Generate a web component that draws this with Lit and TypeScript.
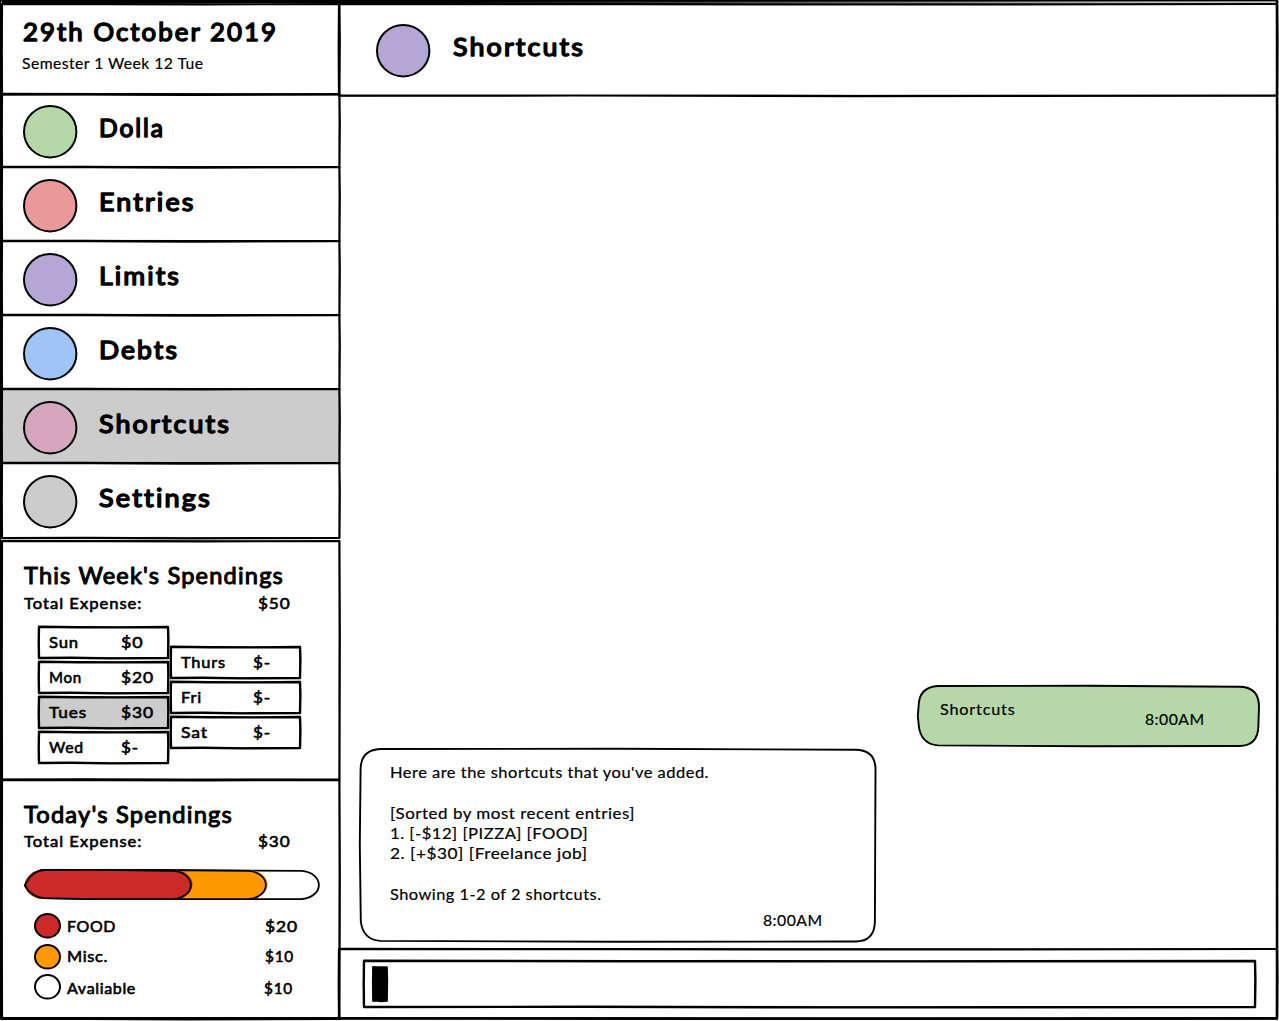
import { LitElement, html, svg, css, nothing } from "lit";
import { customElement, property } from "lit/decorators.js";

/** One line of lettering, fitted to a given width; its baseline lies `size` below its top. */
@customElement("sk-text")
class SkText extends LitElement {
  @property() text = "";
  @property({ type: Number }) w = 100;
  @property({ type: Number }) size = 15.5;
  @property({ type: Number }) ink = 0.15;
  @property({ type: Number }) gap = 0.03;
  static styles = css`
    :host { display: block; flex: none; }
    svg { display: block; overflow: visible; }
    text {
      font-family: Lato, "Open Sans", sans-serif;
      font-variant-ligatures: none;
      fill: #000;
      stroke: #000;
      stroke-linejoin: round;
      white-space: pre;
    }
  `;
  render() {
    return html`<svg width=${this.w} height=${Math.ceil(this.size * 1.25)}>
      <text x="0" y=${this.size} font-size=${this.size} stroke-width=${this.ink}
        letter-spacing=${this.gap * this.size}
        textLength=${this.w} lengthAdjust="spacingAndGlyphs">${this.text}</text>
    </svg>`;
  }
}

/** Hand-drawn frame around its slot. */
@customElement("sk-box")
class SkBox extends LitElement {
  @property({ type: Number }) w = 100;
  @property({ type: Number }) h = 100;
  @property({ type: Number }) r = 0;
  @property({ type: Number }) line = 2.2;
  @property() fill = "none";
  static styles = css`
    :host { display: block; position: relative; box-sizing: border-box; flex: none; }
    svg { position: absolute; left: 0; top: 0; overflow: visible; pointer-events: none; }
    .body { position: relative; height: 100%; }
    path, rect { stroke-linejoin: round; stroke-linecap: round; }
  `;
  render() {
    const { w, h, r, line } = this;
    const q = Math.min(r, h / 2);
    const rounded = `M${r} 0 L${w * 0.5} -.3 L${w - r} .8 Q${w} 1 ${w} ${q + 0.5}
      L${w - 0.6} ${h - q} Q${w - 1} ${h} ${w - r} ${h} L${w * 0.5} ${h + 0.3} L${r} ${h - 0.6}
      Q3 ${h - 2} .8 ${h - q} L-.2 ${h * 0.5} L.6 ${q} Q1 1 ${r} 0Z`;
    const pill = `M${r} 0 L${w * 0.4} -.2 L${w - r} .9 A${r} ${h / 2 - 0.4} 0 0 1 ${w - r} ${h}
      L${w * 0.4} ${h + 0.2} L${r} ${h - 0.8} Q6 ${h - 2} 0 ${h / 2 + 1} Q6 1 ${r} 0Z`;
    const square = `M0 -.2 L${w * 0.3} .2 L${w * 0.6} .4 L${w} 0 L${w + 0.4} ${h * 0.4} L${w} ${h}
      L${w * 0.55} ${h + 0.4} L${w * 0.25} ${h - 0.2} L0 ${h} L-.3 ${h * 0.5}Z`;
    const outline = !r ? square : r > h / 2 ? pill : rounded;
    return html`<svg width=${w} height=${h}>
        ${this.fill === "none" ? nothing : svg`<rect width=${w} height=${h} rx=${r} ry=${q} fill=${this.fill} />`}
        <path d=${outline} fill="none" stroke="#000" stroke-width=${line} />
        ${r ? nothing : svg`<path d="M0 .5 L${w * 0.4} -.6 L${w} .5 L${w - 0.5} ${h * 0.6} L${w + 0.3} ${h}
          L${w * 0.45} ${h - 0.6} L0 ${h + 0.4} L.4 ${h * 0.4}Z" fill="none" stroke="#000" stroke-width="1" opacity=".5" />`}
      </svg>
      <div class="body"><slot></slot></div>`;
  }
}

/** Outlined disc. */
@customElement("sk-disc")
class SkDisc extends LitElement {
  @property({ type: Number }) w = 54.4;
  @property({ type: Number }) h = 53.4;
  @property() fill = "#fff";
  static styles = css`
    :host { display: block; flex: none; }
    svg { display: block; overflow: visible; }
  `;
  render() {
    const { w, h } = this;
    return html`<svg width=${w} height=${h}>
      <ellipse cx=${w / 2} cy=${h / 2} rx=${w / 2 - 1} ry=${h / 2 - 1} fill=${this.fill} stroke="#000" stroke-width="2" />
    </svg>`;
  }
}

const NAV = [
  { name: "Dolla", w: 66, h: 73, color: "#b6d7a8", bg: "none" },
  { name: "Entries", w: 96.5, h: 74, color: "#ea9999", bg: "none" },
  { name: "Limits", w: 82, h: 74, color: "#b4a7d6", bg: "none" },
  { name: "Debts", w: 80, h: 74, color: "#9fc5f8", bg: "none" },
  { name: "Shortcuts", w: 132, h: 74, color: "#d5a6bd", bg: "#cccccc" },
  { name: "Settings", w: 113, h: 75, color: "#cccccc", bg: "none" },
];
type Day = [string, number, string, number, string?];
const DAYS_A: Day[] = [
  ["Sun", 30, "$0", 22.5],
  ["Mon", 33, "$20", 33],
  ["Tues", 38, "$30", 33, "#cccccc"],
  ["Wed", 35, "$-", 18],
];
const DAYS_B: Day[] = [
  ["Thurs", 45, "$-", 18],
  ["Fri", 21, "$-", 18],
  ["Sat", 27, "$-", 18],
];
const LEGEND = [
  { name: "FOOD", w: 49, amount: "$20", aw: 33, color: "#cc2929" },
  { name: "Misc.", w: 41, amount: "$10", aw: 29, color: "#ff9900" },
  { name: "Avaliable", w: 69, amount: "$10", aw: 29, color: "#ffffff" },
];
const LINES: [string, number, number][] = [
  ["Here are the shortcuts that you've added.", 319, 41],
  ["[Sorted by most recent entries]", 245, 20],
  ["1. [-$12] [PIZZA] [FOOD]", 198, 20],
  ["2. [+$30] [Freelance job]", 197.5, 41],
  ["Showing 1-2 of 2 shortcuts.", 211.5, 26],
];

@customElement("app-root")
class AppRoot extends LitElement {
  static styles = css`
    :host { display: block; width: 1279px; height: 1021px; overflow: hidden; background: #fff; }
    .frame { padding: 1.3px 0 0 1.6px; }
    .page {
      display: grid;
      grid-template-columns: 337.4px 938px;
      padding-top: 2.4px;
      background: linear-gradient(to right, #000 35%, rgba(0, 0, 0, .25) 90%) top / 100% 2.4px no-repeat;
    }
    .date { height: 90.5px; }
    .date .in { padding: 12.4px 0 0 21px; }
    .sub { margin: 4.6px 0 0 -.4px; }
    .item .in { display: flex; align-items: flex-start; padding: 12px 0 0 21.2px; }
    .item:first-of-type .in { padding-top: 11.1px; }
    .item .name { margin: 7.1px 0 0 22.2px; }
    .week { margin-top: 3px; }
    .panel .in { padding: 21px 0 0 22.2px; }
    .total { display: flex; margin-top: 2.5px; }
    .total .amount { margin-left: auto; margin-right: 48.7px; }
    .days { display: flex; gap: 3px; padding: 14.2px 0 0 15.6px; }
    .col { display: flex; flex-direction: column; gap: 4px; }
    .col.late { padding-top: 20px; }
    .day { display: grid; grid-template-columns: 72px 1fr; padding: 4.7px 0 0 10px; }
    .bar { display: grid; margin-top: 18.6px; margin-left: .9px; height: 29px; }
    .bar > * { grid-area: 1 / 1; }
    .legend { display: flex; flex-direction: column; gap: 4.8px; padding: 14.6px 0 0 10px; }
    .entry { display: flex; align-items: flex-start; }
    .entry .label { margin: 2.4px 0 0 6.4px; }
    .entry .slot { width: 73.6px; margin-left: auto; padding-top: 2.4px; }
    .entry:last-child .label { margin-top: 3.4px; }
    .entry:last-child .slot { padding-top: 3.4px; width: 74.6px; }
    .main { display: flex; flex-direction: column; }
    .title { display: flex; align-items: flex-start; padding: 20.6px 0 0 37.2px; }
    .title .name { margin: 6.3px 0 0 22.6px; }
    .chat { display: flex; flex-direction: column; height: 853.5px; box-sizing: border-box; padding: 590.3px 17.6px 0 20.6px; }
    .mine { align-self: flex-end; width: 341px; height: 60px; }
    .mine .in { display: flex; justify-content: space-between; padding: 13.8px 54.7px 0 21.3px; }
    .mine .time { margin-top: 9.5px; }
    .reply { margin-top: 3px; width: 515.5px; height: 192.5px; }
    .reply .in { padding: 13.4px 53px 0 30.2px; }
    .reply .line { display: flex; align-items: flex-start; }
    .reply .time { display: flex; justify-content: flex-end; }
    .compose { padding: 12.3px 0 0 25.4px; }
    .field { width: 891px; height: 46px; }
    .caret { padding: 6px 0 0 8.6px; }
  `;

  private day([name, w, amount, aw, bg]: Day) {
    return html`<sk-box w="129" h="31" fill=${bg ?? "none"} line="2.4" style="height:31px;width:129px">
      <div class="day">
        <sk-text text=${name} w=${w} ink=".6" size="15.5" gap=".05"></sk-text>
        <sk-text text=${amount} w=${aw} ink=".6" size="15.5" gap=".05"></sk-text>
      </div>
    </sk-box>`;
  }

  private total(amount: string) {
    return html`<div class="total">
      <sk-text text="Total Expense:" w="118.5" ink=".6" size="15.5" gap=".06"></sk-text>
      <sk-text class="amount" text=${amount} w="32.5" ink=".6" size="15.5" gap=".05"></sk-text>
    </div>`;
  }

  render() {
    return html`
      <sk-box class="frame" w="1277" h="1018.4" line="2.6">
        <div class="page">
          <div class="side">
            <sk-box class="date" w="337.4" h="90.5">
              <div class="in">
                <sk-text text="29th October 2019" w="255" size="25.4" ink="1.5" gap=".08"></sk-text>
                <sk-text class="sub" text="Semester 1 Week 12 Tue" w="181.5" size="15.9" ink=".2"></sk-text>
              </div>
            </sk-box>
            <nav>
              ${NAV.map((n) => html`<sk-box class="item" w="337.4" h=${n.h} fill=${n.bg} style="height:${n.h}px">
                <div class="in">
                  <sk-disc fill=${n.color}></sk-disc>
                  <sk-text class="name" text=${n.name} w=${n.w} size="25" ink="1.5" gap=".08"></sk-text>
                </div>
              </sk-box>`)}
            </nav>
            <sk-box class="panel week" w="337.4" h="238.5" style="height:238.5px">
              <div class="in">
                <sk-text text="This Week's Spendings" w="260" size="22.4" ink="1" gap=".05"></sk-text>
                ${this.total("$50")}
                <div class="days">
                  <div class="col">${DAYS_A.map((d) => this.day(d))}</div>
                  <div class="col late">${DAYS_B.map((d) => this.day(d))}</div>
                </div>
              </div>
            </sk-box>
            <sk-box class="panel" w="337.4" h="239" style="height:239px">
              <div class="in">
                <sk-text text="Today's Spendings" w="209" size="22.4" ink="1" gap=".05"></sk-text>
                ${this.total("$30")}
                <div class="bar">
                  <sk-box w="295.5" h="29" r="19" line="1.8" fill="#ffffff"></sk-box>
                  <sk-box w="242.5" h="29" r="19" line="1.8" fill="#ff9900"></sk-box>
                  <sk-box w="167.5" h="29" r="19" line="1.8" fill="#cc2929"></sk-box>
                </div>
                <div class="legend">
                  ${LEGEND.map((l) => html`<div class="entry">
                    <sk-disc w="27" h="25.6" fill=${l.color}></sk-disc>
                    <sk-text class="label" text=${l.name} w=${l.w} size="15.5" ink=".6" gap=".04"></sk-text>
                    <div class="slot"><sk-text text=${l.amount} w=${l.aw} size="15.5" ink=".6" gap=".05"></sk-text></div>
                  </div>`)}
                </div>
              </div>
            </sk-box>
          </div>
          <div class="main">
            <sk-box w="938" h="91.7" style="height:91.7px">
              <div class="title">
                <sk-disc fill="#b4a7d6"></sk-disc>
                <sk-text class="name" text="Shortcuts" w="132" size="25" ink="1.5" gap=".08"></sk-text>
              </div>
            </sk-box>
            <div class="chat">
              <sk-box class="mine" w="341" h="60" r="20" line="1.9" fill="#b6d7a8">
                <div class="in">
                  <sk-text text="Shortcuts" w="75.5" size="15.9" ink=".2" gap=".05"></sk-text>
                  <sk-text class="time" text="8:00AM" w="59.5" size="15.9" ink=".2"></sk-text>
                </div>
              </sk-box>
              <sk-box class="reply" w="515.5" h="192.5" r="20" line="1.9">
                <div class="in">
                  ${LINES.map(([t, w, h]) => html`<div class="line" style="height:${h}px">
                    <sk-text text=${t} w=${w} size="15.9" ink=".2"></sk-text>
                  </div>`)}
                  <div class="time"><sk-text text="8:00AM" w="59.5" size="15.9" ink=".2"></sk-text></div>
                </div>
              </sk-box>
            </div>
            <sk-box w="938" h="69.5" style="height:69.5px">
              <div class="compose">
                <sk-box class="field" w="891" h="46" line="2.4">
                  <div class="caret"><sk-box w="14" h="34" fill="#000" line="1.6"></sk-box></div>
                </sk-box>
              </div>
            </sk-box>
          </div>
        </div>
      </sk-box>
    `;
  }
}
